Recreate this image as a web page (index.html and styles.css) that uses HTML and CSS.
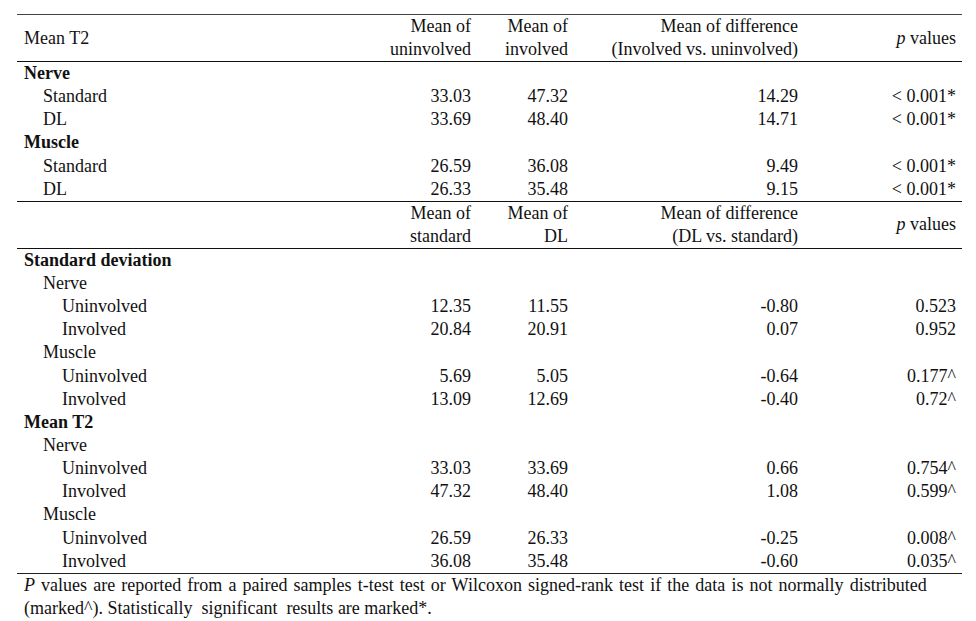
FILE: index.html
```html
<!DOCTYPE html>
<html lang="en">
<head>
<meta charset="utf-8">
<title>Mean T2 table</title>
<link rel="stylesheet" href="styles.css">
</head>
<body>
<div class="page">
  <table class="stats">
    <colgroup>
      <col class="c-label">
      <col class="c-a">
      <col class="c-b">
      <col class="c-c">
      <col class="c-d">
    </colgroup>
    <thead>
      <tr class="head first">
        <th class="label mid">Mean T2</th>
        <th class="num">Mean of<br>uninvolved</th>
        <th class="num">Mean of<br>involved</th>
        <th class="num">Mean of difference<br>(Involved vs. uninvolved)</th>
        <th class="num mid"><i>p</i> values</th>
      </tr>
    </thead>
    <tbody>
      <tr class="top"><td class="label b">Nerve</td><td></td><td></td><td></td><td></td></tr>
      <tr><td class="label l1">Standard</td><td class="num">33.03</td><td class="num">47.32</td><td class="num">14.29</td><td class="num">&lt; 0.001*</td></tr>
      <tr><td class="label l1">DL</td><td class="num">33.69</td><td class="num">48.40</td><td class="num">14.71</td><td class="num">&lt; 0.001*</td></tr>
      <tr><td class="label b">Muscle</td><td></td><td></td><td></td><td></td></tr>
      <tr><td class="label l1">Standard</td><td class="num">26.59</td><td class="num">36.08</td><td class="num">9.49</td><td class="num">&lt; 0.001*</td></tr>
      <tr><td class="label l1">DL</td><td class="num">26.33</td><td class="num">35.48</td><td class="num">9.15</td><td class="num">&lt; 0.001*</td></tr>
      <tr class="head top">
        <th class="label"></th>
        <th class="num">Mean of<br>standard</th>
        <th class="num">Mean of<br>DL</th>
        <th class="num">Mean of difference<br>(DL vs. standard)</th>
        <th class="num mid"><i>p</i> values</th>
      </tr>
      <tr class="top"><td class="label b">Standard deviation</td><td></td><td></td><td></td><td></td></tr>
      <tr><td class="label l1">Nerve</td><td></td><td></td><td></td><td></td></tr>
      <tr><td class="label l2">Uninvolved</td><td class="num">12.35</td><td class="num">11.55</td><td class="num">-0.80</td><td class="num">0.523</td></tr>
      <tr><td class="label l2">Involved</td><td class="num">20.84</td><td class="num">20.91</td><td class="num">0.07</td><td class="num">0.952</td></tr>
      <tr><td class="label l1">Muscle</td><td></td><td></td><td></td><td></td></tr>
      <tr><td class="label l2">Uninvolved</td><td class="num">5.69</td><td class="num">5.05</td><td class="num">-0.64</td><td class="num">0.177^</td></tr>
      <tr><td class="label l2">Involved</td><td class="num">13.09</td><td class="num">12.69</td><td class="num">-0.40</td><td class="num">0.72^</td></tr>
      <tr><td class="label b">Mean T2</td><td></td><td></td><td></td><td></td></tr>
      <tr><td class="label l1">Nerve</td><td></td><td></td><td></td><td></td></tr>
      <tr><td class="label l2">Uninvolved</td><td class="num">33.03</td><td class="num">33.69</td><td class="num">0.66</td><td class="num">0.754^</td></tr>
      <tr><td class="label l2">Involved</td><td class="num">47.32</td><td class="num">48.40</td><td class="num">1.08</td><td class="num">0.599^</td></tr>
      <tr><td class="label l1">Muscle</td><td></td><td></td><td></td><td></td></tr>
      <tr><td class="label l2">Uninvolved</td><td class="num">26.59</td><td class="num">26.33</td><td class="num">-0.25</td><td class="num">0.008^</td></tr>
      <tr class="last"><td class="label l2">Involved</td><td class="num">36.08</td><td class="num">35.48</td><td class="num">-0.60</td><td class="num">0.035^</td></tr>
    </tbody>
  </table>
  <p class="note"><span class="wide"><i>P</i> values are reported from a paired samples t-test test or Wilcoxon signed-rank test if the data is not normally distributed</span><br>(marked^). Statistically&nbsp; significant&nbsp; results are marked*.</p>
</div>
</body>
</html>
```

FILE: styles.css
```css
html, body {
  margin: 0;
  padding: 0;
  background: #ffffff;
}

body {
  font-family: "Liberation Serif", "Times New Roman", serif;
  font-size: 18px;
  line-height: 23px;
  color: #111111;
}

.page {
  padding: 14px 14px 0 17px;
}

.stats {
  width: 945px;
  border-collapse: collapse;
  table-layout: fixed;
  border-top: 1px solid #444444;
  border-bottom: 1px solid #222222;
}

.c-label { width: 373px; }
.c-a { width: 87px; }
.c-b { width: 97px; }
.c-c { width: 230px; }
.c-d { width: 158px; }

.stats th,
.stats td {
  padding: 0;
  font-weight: normal;
  vertical-align: top;
  height: 23.15px;
  white-space: nowrap;
}

.stats tr.head th {
  height: 23px;
}

.stats th.mid {
  vertical-align: middle;
}

.stats tr.top > * {
  border-top: 1px solid #111111;
}

.stats tbody td {
  vertical-align: middle;
}

.label {
  text-align: left;
  padding-left: 7px !important;
}

.label.l1 { padding-left: 26px !important; }
.label.l2 { padding-left: 45px !important; }

.label.b {
  font-weight: bold;
}

.num {
  text-align: right;
  padding-right: 6px !important;
}

.note {
  margin: 0;
  padding-left: 7px;
  padding-top: 0;
}

.note .wide {
  word-spacing: 1.6px;
}
```
